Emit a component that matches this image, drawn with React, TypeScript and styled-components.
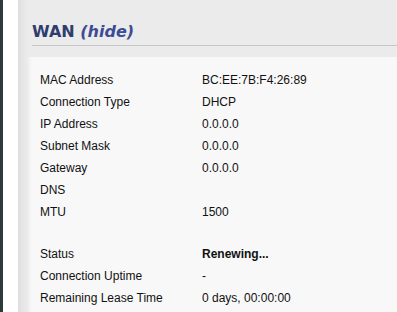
import styled, { createGlobalStyle } from "styled-components";

const GlobalStyle = createGlobalStyle`
    html, body {
        margin: 0;
        padding: 0;
        height: 312px;
        overflow: hidden;
    }
    body {
        font-family: "Liberation Sans", Tahoma, Arial, sans-serif;
    }
`

type Row = { label: string; value?: string; strong?: boolean }

const groups: Row[][] = [
    [
        { label: "MAC Address", value: "BC:EE:7B:F4:26:89" },
        { label: "Connection Type", value: "DHCP" },
        { label: "IP Address", value: "0.0.0.0" },
        { label: "Subnet Mask", value: "0.0.0.0" },
        { label: "Gateway", value: "0.0.0.0" },
        { label: "DNS", value: "" },
        { label: "MTU", value: "1500" },
    ],
    [
        { label: "Status", value: "Renewing...", strong: true },
        { label: "Connection Uptime", value: "-" },
        { label: "Remaining Lease Time", value: "0 days, 00:00:00" },
    ],
]

function App() {
    return (
        <>
            <GlobalStyle/>
            <Page>
                <Rail/>
                <Gutter/>
                <Main>
                    <Header>
                        WAN <Toggle>(hide)</Toggle>
                    </Header>
                    <InfoBox>
                        {groups.map((group, gi) => (
                            <Group key={gi}>
                                {group.map((row) => (
                                    <InfoRow key={row.label}>
                                        <Label>{row.label}</Label>
                                        <Value $strong={row.strong}>{row.value}</Value>
                                    </InfoRow>
                                ))}
                            </Group>
                        ))}
                    </InfoBox>
                </Main>
            </Page>
        </>
    )
}

const Page = styled.div`
    display: flex;
    height: 312px;
    width: 100%;
`

const Rail = styled.div`
    width: 3px;
    flex-shrink: 0;
    background: #2b3a3a;
`

const Gutter = styled.div`
    width: 15px;
    flex-shrink: 0;
    background: #ffffff;
`

const Main = styled.div`
    flex: 1;
    display: flex;
    flex-direction: column;
    padding-left: 10px;
    background: linear-gradient(to right, #dedede 0px, #e8e8e8 6px, #ebebeb 10px);
`

const Header = styled.h2`
    margin: 21px 0 0 4px;
    padding-bottom: 2px;
    border-bottom: 1px solid #c6c6c6;
    font-family: "DejaVu Sans", Verdana, sans-serif;
    font-size: 16px;
    line-height: 22px;
    font-weight: bold;
    color: #2f3d6e;
`

const Toggle = styled.span`
    font-style: italic;
    color: #3c4d95;
    cursor: pointer;
`

const InfoBox = styled.div`
    flex: 1;
    margin-top: 11px;
    padding: 12px 0 0 12px;
    background: linear-gradient(to right, #efefef 0px, #f8f8f8 4px);
    display: flex;
    flex-direction: column;
    gap: 20px;
`

const Group = styled.div`
    display: flex;
    flex-direction: column;
`

const InfoRow = styled.div`
    display: grid;
    grid-template-columns: 162px 1fr;
    height: 22px;
    font-size: 12px;
    line-height: 22px;
    color: #111111;
`

const Label = styled.span`
    white-space: nowrap;
`

const Value = styled.span<{ $strong?: boolean }>`
    white-space: nowrap;
    font-weight: ${(p) => (p.$strong ? "bold" : "normal")};
`

export default App
